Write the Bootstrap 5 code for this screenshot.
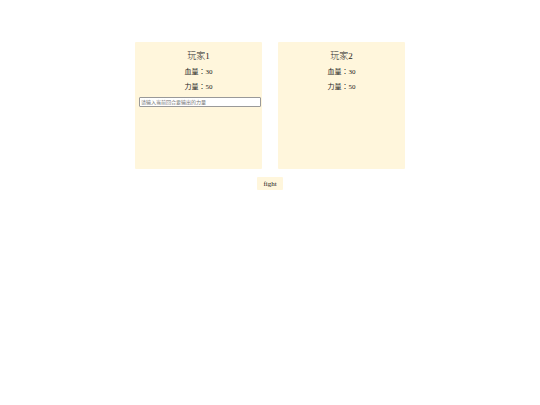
<!DOCTYPE html>
<html lang="zh-Hant">
<head>
<meta charset="utf-8">
<meta name="viewport" content="width=device-width, initial-scale=1">
<title>Fight</title>
<link href="https://cdn.jsdelivr.net/npm/bootstrap@5.3.0/dist/css/bootstrap.min.css" rel="stylesheet">
<style>
body { font-family: "Liberation Serif", "Noto Sans CJK TC", serif; font-size: 7px; line-height: 8px; color: #222; }
.arena { width: 50%; padding-top: 42px; }
.players { gap: 16px; }
.player { flex: 1 1 0; aspect-ratio: 1; min-width: 0; background: #fff6dc; border-radius: 1px; padding: 8px 4px 0; }
.player h2 { font-size: 9px; line-height: 12px; font-weight: 300; margin: 0 0 6px; }
.player p { line-height: 9px; margin: 0 0 5px; }
.player p + p { padding-top: 1px; }
.power { display: block; width: calc(100% + 3px); height: 10px; padding: 0 1px; border: 1px solid #999; border-radius: 1px; background: #fff; font-family: "Liberation Sans", "Noto Sans CJK SC", sans-serif; font-size: 5px; line-height: 8px; }
.power::placeholder { color: #757575; opacity: 1; }
.fight { background: #fff6dc; border: 0; border-radius: 1px; padding: 3px 6px 2px; margin-top: 8px; font-size: 7px; line-height: 8px; color: #222; }
</style>
</head>
<body>
<main class="arena mx-auto text-center">
  <div class="players d-flex">
    <section class="player">
      <h2>玩家1</h2>
      <p>血量：30</p>
      <p>力量：50</p>
      <input class="power" type="text" lang="zh-Hans" aria-label="力量" placeholder="请输入当前回合要输出的力量">
    </section>
    <section class="player">
      <h2>玩家2</h2>
      <p>血量：30</p>
      <p>力量：50</p>
    </section>
  </div>
  <button class="fight" type="button">fight</button>
</main>
<script src="https://cdn.jsdelivr.net/npm/bootstrap@5.3.0/dist/js/bootstrap.bundle.min.js"></script>
</body>
</html>
